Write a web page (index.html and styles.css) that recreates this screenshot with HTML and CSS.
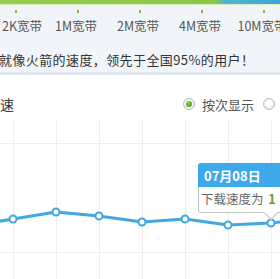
FILE: index.html
```html
<!DOCTYPE html>
<html lang="zh-CN">
<head>
    <meta charset="UTF-8">
    <title>测速结果</title>
    <link rel="stylesheet" href="styles.css">
</head>
<body>
    <div class="header">
        <div class="meter"></div>
        <div class="scale">
            <div class="step first"><span class="tick"></span><span class="step-label">2K宽带</span></div>
            <div class="step"><span class="tick"></span><span class="step-label">1M宽带</span></div>
            <div class="step"><span class="tick"></span><span class="step-label">2M宽带</span></div>
            <div class="step"><span class="tick"></span><span class="step-label">4M宽带</span></div>
            <div class="step"><span class="tick"></span><span class="step-label">10M宽带</span></div>
        </div>
        <p class="message">就像火箭的速度，领先于全国95%的用户！</p>
    </div>

    <div class="toolbar">
        <span class="title">速</span>
        <div class="options">
            <label class="option"><span class="radio checked"></span>按次显示</label>
            <label class="option"><span class="radio"></span></label>
        </div>
    </div>

    <div class="chart">
        <svg width="280" height="163" viewBox="0 0 280 163">
            <g class="grid">
                <line x1="0" y1="27.5" x2="280" y2="27.5"/>
                <line x1="0" y1="136.5" x2="280" y2="136.5"/>
                <line x1="13.5" y1="4" x2="13.5" y2="163"/>
                <line x1="56.5" y1="4" x2="56.5" y2="163"/>
                <line x1="99.5" y1="4" x2="99.5" y2="163"/>
                <line x1="142.5" y1="4" x2="142.5" y2="163"/>
                <line x1="185.5" y1="4" x2="185.5" y2="163"/>
                <line x1="228.5" y1="4" x2="228.5" y2="163"/>
                <line x1="271.5" y1="4" x2="271.5" y2="163"/>
            </g>
            <polyline class="series" points="-30,110 13,103 56,96 99,100 142,106 185,103 228,109 271,107 300,104"/>
            <g class="dots">
                <circle cx="13" cy="103" r="3.5"/>
                <circle cx="56" cy="96" r="3.5"/>
                <circle cx="99" cy="100" r="3.5"/>
                <circle cx="142" cy="106" r="3.5"/>
                <circle cx="185" cy="103" r="3.5"/>
                <circle cx="228" cy="109" r="3.5"/>
                <circle cx="271" cy="107" r="3.5"/>
            </g>
        </svg>

        <div class="tooltip">
            <div class="tooltip-head">07月08日</div>
            <div class="tooltip-body">下载速度为 <b>1</b></div>
            <span class="tooltip-arrow"></span>
        </div>
    </div>
</body>
</html>
```

FILE: styles.css
```css
* {
    margin: 0;
    padding: 0;
    box-sizing: border-box;
}

body {
    font-family: "Noto Sans CJK SC", "Noto Sans", sans-serif;
    background: #fff;
    color: #333;
    overflow: hidden;
}

.header {
    background: #f1f5f9;
    height: 75px;
    border-bottom: 3px solid #dfe7ee;
}

.meter {
    height: 5px;
    background: linear-gradient(to right, #96cd52 0, #8cc64a 214px, #52b4d4 226px, #3ea4dc 100%);
    border-bottom: 1px solid #d6eab8;
}

.scale {
    display: flex;
    margin-left: -15px;
}

.step {
    flex: 0 0 62px;
    display: flex;
    flex-direction: column;
    align-items: center;
    padding-top: 5px;
}

.tick {
    width: 2px;
    height: 3px;
    background: #8fb24f;
}

.step-label {
    margin-top: 6px;
    margin-right: 4px;
    font-size: 12.5px;
    line-height: 14px;
    color: #555;
    white-space: nowrap;
}

.step.first .step-label {
    margin-right: 0;
    margin-left: 12px;
}

.message {
    margin-top: 19px;
    margin-left: -1px;
    font-size: 13px;
    letter-spacing: 0.4px;
    line-height: 16px;
    white-space: nowrap;
    color: #333;
}

.toolbar {
    display: flex;
    align-items: center;
    height: 24px;
    margin-top: 17px;
}

.title {
    font-size: 14px;
    color: #333;
}

.options {
    display: flex;
    align-items: center;
    gap: 9px;
    margin-left: auto;
    margin-right: -56px;
    width: 153px;
}

.option {
    display: flex;
    align-items: center;
    gap: 7px;
    font-size: 13px;
    color: #555;
    white-space: nowrap;
}

.radio {
    position: relative;
    width: 12px;
    height: 12px;
    border-radius: 50%;
    border: 1px solid #b9b9b9;
    background: radial-gradient(circle at 50% 40%, #fff 30%, #e2e2e2 100%);
}

.radio.checked::after {
    content: "";
    position: absolute;
    left: 2px;
    top: 2px;
    width: 6px;
    height: 6px;
    border-radius: 50%;
    background: radial-gradient(circle at 40% 35%, #8ad24f 0, #4ea81c 70%);
}

.chart {
    position: relative;
    height: 163px;
    overflow: hidden;
}

.chart svg {
    display: block;
}

.grid line {
    stroke: #eeeeee;
    stroke-width: 1;
}

.series {
    fill: none;
    stroke: #42a8e0;
    stroke-width: 3;
    stroke-linejoin: round;
}

.dots circle {
    fill: #fff;
    stroke: #42a8e0;
    stroke-width: 2;
}

.tooltip {
    position: absolute;
    left: 198px;
    top: 47px;
    width: 110px;
    background: #fff;
    border: 1px solid #c4c4c4;
    border-radius: 3px;
}

.tooltip-head {
    height: 24px;
    margin: -1px -1px 0;
    padding-left: 6px;
    background: #3ea9ea;
    border-radius: 3px 3px 0 0;
    color: #fff;
    font-size: 13px;
    font-weight: bold;
    line-height: 25px;
}

.tooltip-body {
    height: 25px;
    padding-left: 2px;
    font-size: 12.5px;
    line-height: 24px;
    color: #666;
    white-space: nowrap;
}

.tooltip-body b {
    color: #6a9a1c;
    margin-left: 2px;
}

.tooltip-arrow {
    position: absolute;
    left: 67px;
    bottom: -6px;
    width: 10px;
    height: 10px;
    background: #fff;
    border-right: 1px solid #c4c4c4;
    border-bottom: 1px solid #c4c4c4;
    transform: rotate(45deg);
}
```
